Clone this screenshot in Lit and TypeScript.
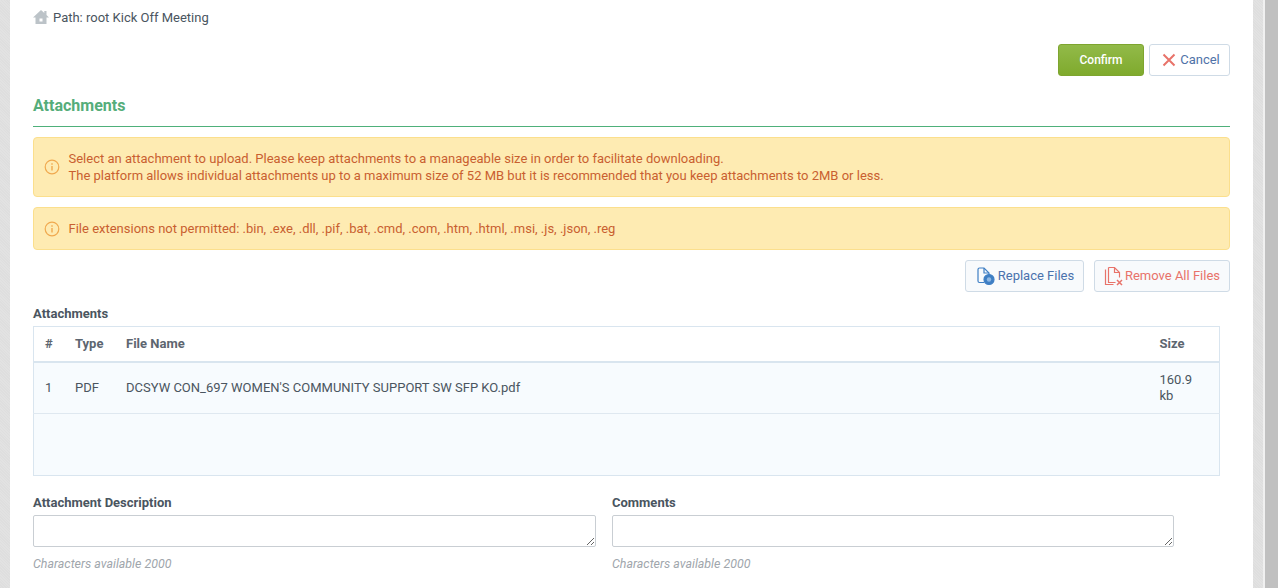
import { LitElement, html, css } from "lit";
import { customElement } from "lit/decorators.js";

const info = html`<svg class="info" viewBox="0 0 16 16" width="16" height="16" fill="none" stroke="#f0a94f" stroke-width="1.2"><circle cx="8" cy="8" r="6.8"/><path d="M8 7v4.6" stroke-width="1.4"/><path d="M8 4.2v1.5" stroke-width="1.4"/></svg>`;

@customElement("app-root")
export class AppRoot extends LitElement {
  static styles = css`
    :host { display: block; height: 588px; overflow: hidden; background: #fff; font-family: Roboto, sans-serif; font-size: 13px; color: #4a5560; }
    * { box-sizing: border-box; }
    .page { display: flex; height: 588px; }
    .tex { flex: none; width: 10px; background-color: #e0e0e0; background-image: repeating-linear-gradient(45deg, #dedede 0 1px, #e2e2e2 1px 2px); }
    .main { flex: none; width: 1243px; padding: 0 23px; display: flex; flex-direction: column; }
    .gap { flex: none; width: 2px; background: #f0f0f0; }
    .bar { flex: none; width: 13px; background: #c0c0c0; }
    .crumb { height: 34px; display: flex; align-items: center; gap: 4px; color: #4a5560; }
    .actions { display: flex; justify-content: flex-end; gap: 5px; margin-top: 10px; height: 32px; }
    .btn { display: flex; align-items: center; justify-content: center; height: 32px; border-radius: 3px; font-size: 13px; border: 1px solid #cfdbe6; background: #fff; }
    .confirm { width: 86px; background: linear-gradient(#92ba49, #7faa2d); border: 1px solid #7ea52f; color: #fff; font-weight: 500; font-size: 12px; padding-bottom: 1px; }
    .cancel { width: 81px; color: #4f72a8; gap: 4px; padding-left: 3px; padding-bottom: 1px; }
    h2 { margin: 19px 0 0; height: 32px; padding-top: 1px; font-size: 16px; line-height: 20px; font-weight: 700; color: #55ad7a; border-bottom: 1px solid #4eb07a; }
    .alert { display: flex; align-items: center; gap: 8.5px; margin-top: 10px; padding: 0 10px; background: #feebb2; border: 1px solid #fbdf8d; border-radius: 4px; color: #c95f30; line-height: 17px; }
    .a1 { height: 60px; }
    .a2 { height: 43px; }
    .info { flex: none; }
    .tools { display: flex; justify-content: flex-end; gap: 10px; margin-top: 10px; }
    .tool { height: 32px; background: #f8fafc; font-size: 13px; padding-bottom: 2px; }
    .replace { width: 119px; color: #4a72ad; gap: 2px; padding-left: 1px; }
    .remove { width: 136px; color: #e8726a; gap: 1px; }
    .tool svg { margin-top: 2px; }
    .lbl { font-weight: 700; color: #4a5560; font-size: 13px; line-height: 16px; }
    .tlbl { margin-top: 14px; }
    table { width: 1187px; margin-top: 4px; border-collapse: collapse; border: 1px solid #d9e5ef; table-layout: fixed; }
    th { height: 35px; padding: 0 11px; text-align: left; font-weight: 700; color: #5d6670; border-bottom: 2px solid #d9e5ef; font-size: 13px; }
    td { padding: 0 11px; line-height: 17px; background: #f7fbfe; color: #4a5560; }
    .row td { height: 52px; border-bottom: 1px solid #dfe8f0; }
    .empty td { height: 62px; }
    .c1 { width: 30.5px; } .c2 { width: 51px; } .c4 { width: 71px; }
    td.sz { padding-right: 20px; line-height: 16px; }
    .form { display: flex; gap: 16px; margin-top: 19px; }
    .field { width: 563px; }
    .field + .field { width: 562px; }
    .ta { display: block; width: 100%; height: 32px; margin: 4px 0 0; border: 1px solid #c9ced3; border-radius: 2px; background: #fff; resize: vertical; outline: none; }
    .hint { margin-top: 9px; font-size: 12.4px; line-height: 16px; font-style: italic; color: #a0a6ac; }
  `;

  render() {
    return html`
      <div class="page">
        <div class="tex"></div>
        <div class="main">
          <div class="crumb">
            <svg width="16" height="16" viewBox="0 0 16 16" fill="#bcc3c8"><path d="M8 1 0 8.5h2.5V15h11V8.5H16l-2.5-2.4V2h-2.2v2z"/><rect x="6.5" y="9.5" width="3" height="3" fill="#fff"/></svg>
            <span>Path: root Kick Off Meeting</span>
          </div>
          <div class="actions">
            <div class="btn confirm">Confirm</div>
            <div class="btn cancel">
              <svg width="14" height="14" viewBox="0 0 14 14" stroke="#e8736a" stroke-width="2" fill="none"><path d="M1.5 1.5 12.5 12.5M12.5 1.5 1.5 12.5"/></svg>
              <span>Cancel</span>
            </div>
          </div>
          <h2>Attachments</h2>
          <div class="alert a1">${info}<div>Select an attachment to upload. Please keep attachments to a manageable size in order to facilitate downloading.<br>The platform allows individual attachments up to a maximum size of 52 MB but it is recommended that you keep attachments to 2MB or less.</div></div>
          <div class="alert a2">${info}<div>File extensions not permitted: .bin, .exe, .dll, .pif, .bat, .cmd, .com, .htm, .html, .msi, .js, .json, .reg</div></div>
          <div class="tools">
            <div class="btn tool replace">
              <svg width="20" height="20" viewBox="0 0 20 20" fill="none" stroke="#3f7fc4" stroke-width="1.2"><path d="M8 16.5H3.5a1.5 1.5 0 0 1-1.5-1.5V3.5A1.5 1.5 0 0 1 3.5 2H8l5 5v2"/><path d="M8 2v5h5"/><circle cx="13" cy="13.5" r="5" fill="#3f7fc4" stroke="#3f7fc4"/><circle cx="13" cy="13.5" r="2.2" fill="#8fb8e2" stroke="none"/></svg>
              <span>Replace Files</span>
            </div>
            <div class="btn tool remove">
              <svg width="20" height="20" viewBox="0 0 20 20" fill="none" stroke="#e8736a" stroke-width="1.2"><path d="M4.5 1.5h6l5 5v5M10.5 1.5v5h5M4.5 1.5v15h7M1.5 3.5v15h8"/><path d="M13 14l5 5M18 14l-5 5" stroke-width="1.5"/></svg>
              <span>Remove All Files</span>
            </div>
          </div>
          <div class="lbl tlbl">Attachments</div>
          <table>
            <thead><tr><th class="c1">#</th><th class="c2">Type</th><th class="c3">File Name</th><th class="c4">Size</th></tr></thead>
            <tbody>
              <tr class="row"><td>1</td><td>PDF</td><td>DCSYW CON_697 WOMEN'S COMMUNITY SUPPORT SW SFP KO.pdf</td><td class="sz">160.9 kb</td></tr>
              <tr class="empty"><td colspan="4"></td></tr>
            </tbody>
          </table>
          <div class="form">
            <div class="field"><div class="lbl">Attachment Description</div><textarea class="ta"></textarea><div class="hint">Characters available 2000</div></div>
            <div class="field"><div class="lbl">Comments</div><textarea class="ta"></textarea><div class="hint">Characters available 2000</div></div>
          </div>
        </div>
        <div class="tex"></div>
        <div class="gap"></div>
        <div class="bar"></div>
      </div>
    `;
  }
}
